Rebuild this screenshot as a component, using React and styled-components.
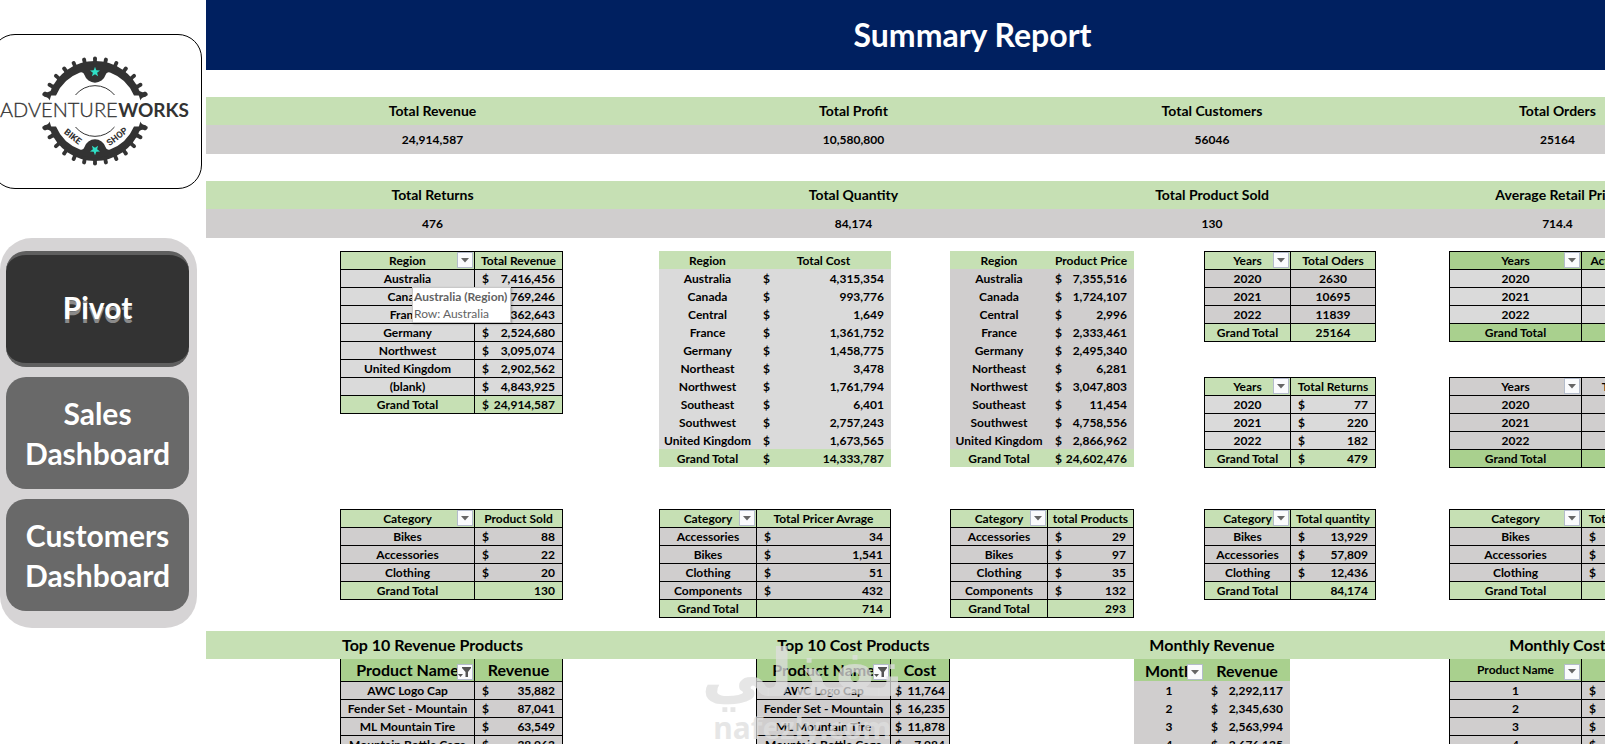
import React from 'react'
import styled, { createGlobalStyle } from 'styled-components'

const GREEN = '#c6e0b4';
const DARK_GREEN = '#a9d08e';
const GREY = '#d0cece';
const LIGHT_GREY = '#dadada';

const GlobalStyle = createGlobalStyle`
    * { box-sizing: border-box; }
    body {
        margin: 0;
        background: #fff;
        color: #000;
        font-family: Lato, "Liberation Sans", sans-serif;
        font-weight: bold;
    }
`;

const Page = styled.div`
    position: relative;
    display: flex;
    height: 100vh;
    overflow: hidden;
`;

const Sidebar = styled.aside`
    flex: 0 0 206px;
    padding-top: 34px;
`;

const LogoCard = styled.div`
    height: 155px;
    margin: 0 4px 49px -9px;
    padding: 16px 0 0 8px;
    border: 1px solid #000;
    border-radius: 24px;
`;

const Menu = styled.nav`
    display: flex;
    flex-direction: column;
    gap: 10px;
    margin-right: 9px;
    padding: 13px 8px 17px 6px;
    border-radius: 32px;
    background: #d6d4d5;
`;

const MenuButton = styled.button`
    height: ${(p) => (p.$active ? "116px" : "112px")};
    padding: ${(p) => (p.$active ? "0 10px 4px" : "0 10px")};
    border: 0 solid #5f5f5f;
    border-width: ${(p) => (p.$active ? "4px 0" : "0")};
    border-radius: 20px;
    background: ${(p) => (p.$active ? "#333" : "#696969")};
    color: #fff;
    font: bold 30px/40px Lato, sans-serif;
    text-shadow: ${(p) => (p.$active ? "0 4px 0 #8a8a8a" : "none")};
    cursor: pointer;
`;

const Main = styled.main`
    flex: 1;
    min-width: 0;
    overflow: hidden;
`;

// as wide as its columns, runs out of the window on the right
const Sheet = styled.div`
    width: max-content;
`;

const Title = styled.h1`
    margin: 0;
    background: #002060;
    color: #fff;
    font-size: 32px;
    line-height: 70px;
    text-align: center;
`;

// every band of the sheet shares the same columns
const Columns = styled.div`
    display: grid;
    grid-template-columns: 134px 135px 88px 96px 97px 135px 59px 98px 86px 70px 86px 86px 73px 133px 85px 72px;
    align-items: start;
`;

const Kpis = styled(Columns)`
    margin-top: 27px;
    background: linear-gradient(${GREEN} 0 28px, ${GREY} 28px);
`;

const Kpi = styled.div`
    grid-column: ${(p) => p.$span};
    text-align: center;
`;

const KpiName = styled.div`
    font-size: 14px;
    line-height: 28px;
`;

const KpiValue = styled.div`
    font-size: 12px;
    line-height: 29px;
`;

const Band = styled(Columns)`
    margin-top: ${(p) => p.$gap};
    background: ${(p) => (p.$fill ? GREEN : "transparent")};
`;

const BandTitle = styled.h2`
    grid-column: ${(p) => p.$span};
    margin: 0;
    font-size: 16px;
    line-height: 28px;
    text-align: center;
`;

const Cell = styled.div`
    position: relative;
    grid-column: ${(p) => p.$span};
    display: grid;
    gap: 35px;
`;

const Table = styled.table`
    width: 100%;
    table-layout: fixed;
    border-collapse: collapse;
    background: ${(p) => p.$body};
    font-size: 12px;
    line-height: 17px;

    th, td {
        position: relative;
        height: 18px;
        padding: 0;
        border: ${(p) => (p.$lines ? "1px solid #000" : "0")};
        text-align: center;
        white-space: nowrap;
    }
    thead th {
        height: ${(p) => (p.$tall ? "22px" : "18px")};
        background: ${(p) => p.$head};
        font-size: ${(p) => (p.$big ? "16px" : "12px")};
        ${(p) => p.$tall && "border-top: 0;"}
    }
    tfoot th, tfoot td {
        background: ${(p) => p.$foot};
    }
`;

const Col = styled.col`
    width: ${(p) => p.$width}px;
`;

const Money = styled.div`
    display: flex;
    justify-content: space-between;
    padding: 0 ${(p) => (p.$tight ? "4px" : "7px")};
`;

const FilterButton = styled.button`
    position: absolute;
    right: 1px;
    bottom: 1px;
    display: grid;
    place-items: center;
    width: 16px;
    height: 16px;
    padding: 0;
    border: 1px solid #b4bccb;
    background: #fafbfd;
    cursor: pointer;
`;

const Tooltip = styled.div`
    position: absolute;
    top: 36px;
    left: 72px;
    padding: 0 3px 0 1px;
    border: 1px solid #c8c8c8;
    background: #fff;
    box-shadow: 1px 1px 2px rgba(0,0,0,0.3);
    color: #636363;
    font-weight: normal;
    font-size: 12px;
    line-height: 17px;
    white-space: nowrap;
`;

const Watermark = styled.div`
    position: absolute;
    left: 50%;
    bottom: -2px;
    transform: translateX(-50%);
    color: rgba(222,222,222,0.75);
    font-family: "Noto Sans", "DejaVu Sans", sans-serif;
    text-align: center;
    pointer-events: none;
`;

const WatermarkName = styled.div`
    font: bold 66px/72px "DejaVu Sans", sans-serif;
`;

const WatermarkSite = styled.div`
    font-size: 30px;
    line-height: 36px;
`;

const TEETH = [-72, -60, -48, -36, -24, -12, 0, 12, 24, 36, 48, 60, 72];
const STAR = "M0-5.2 1.3-1.7 5-1.6 2.1.7 3.1 4.3 0 2.2-3.1 4.3-2.1.7-5-1.6-1.3-1.7Z";

function HalfGear() {
    return (
        <g fill="#333">
            <path d="M-52.500-15.500 Q-53.500-18-50-19.500 Q-47.500-18-44.500-20 A48 48 0 0 1 44.500-20 Q47.500-18 50-19.500 Q53.500-18 52.500-15.500 L39-15.500 A42 42 0 0 0 15-38.500 Q11.500-39.500 10.500-36 A11 11 0 0 1-10.500-36 Q-11.500-39.500-15-38.500 A42 42 0 0 0-39-15.500Z" />
            {TEETH.map((deg) => (
                <path key={deg} transform={`rotate(${deg})`} d="M-4-46.500 Q-1.300-48-2-52.500 Q-2-54.500 0-54.500 Q2-54.500 2-52.500 Q1.300-48 4-46.500Z" />
            ))}
            <path d="M-19.500-16 A25 25 0 0 1 19.500-16" fill="none" stroke="#333" strokeWidth="1" />
        </g>
    );
}

function Logo() {
    return (
        <svg width="192" height="120" viewBox="0 50 192 120" role="img" aria-label="AdventureWorks Bike Shop">
            <g transform="translate(95 110)"><HalfGear /></g>
            <g transform="translate(95 110) scale(1 -1)"><HalfGear /></g>
            <path d={STAR} transform="translate(95 71)" fill="#2fe0c6" />
            <path d={STAR} transform="translate(95 149) rotate(180)" fill="#2fe0c6" />
            <g fill="#333" fontFamily="Lato, sans-serif">
                <text x="0" y="116" fontSize="20" fontWeight="300" stroke="#333" strokeWidth="0.3">ADVENTURE</text>
                <text x="189" y="116" fontSize="19" fontWeight="700" textAnchor="end">WORKS</text>
                <g fontFamily="Roboto, sans-serif" fontSize="9" fontWeight="700" textAnchor="middle">
                    <text transform="translate(71 138) rotate(38)">BIKE</text>
                    <text transform="translate(119 138) rotate(-38)">SHOP</text>
                </g>
            </g>
        </svg>
    );
}

function Filter({ label, funnel }) {
    return (
        <FilterButton aria-label={"Filter " + label}>
            {funnel ? (
                <svg width="14" height="12" viewBox="0 0 14 12">
                    <path d="M4 1h9v1L10 6v5H7.500V6L4 2Z" fill="#555" />
                    <path d="M0 8h5L2.500 11Z" fill="#555" />
                </svg>
            ) : (
                <svg width="8" height="5" viewBox="0 0 8 5">
                    <path d="M0 0h8L4 4.500Z" fill="#666" />
                </svg>
            )}
        </FilterButton>
    );
}

// "$ 88" is spread over the cell, the rest stays centered or goes right
function Value({ text, right, tight }) {
    if (text.startsWith("$")) {
        return <Money $tight={tight}><span>$</span><span>{text.slice(1)}</span></Money>;
    }
    if (right) {
        return <Money><span /><span>{text}</span></Money>;
    }
    return text;
}

function Pivot({ first, heads, rows, total, filter, funnel, right, tight, plain, head = GREEN, body = GREY, foot = GREEN, tall, big }) {
    return (
        <Table $lines={!plain} $head={head} $body={body} $foot={foot} $tall={tall} $big={big}>
            <colgroup><Col $width={first} /><col /></colgroup>
            <thead>
                <tr>
                    <th scope="col">{heads[0]}{filter && <Filter label={heads[0]} funnel={funnel} />}</th>
                    <th scope="col">{heads[1]}</th>
                </tr>
            </thead>
            <tbody>
                {rows.map(([name, value]) => (
                    <tr key={name}>
                        <th scope="row">{name}</th>
                        <td><Value text={value} right={right} tight={tight} /></td>
                    </tr>
                ))}
            </tbody>
            {total !== undefined && (
                <tfoot>
                    <tr>
                        <th scope="row">Grand Total</th>
                        <td><Value text={total} right={right} tight={tight} /></td>
                    </tr>
                </tfoot>
            )}
        </Table>
    );
}

const SPANS = ["1 / 5", "5 / 9", "9 / 13", "13 / 17"];

const kpis = [
    [["Total Revenue", "24,914,587"], ["Total Profit", "10,580,800"], ["Total Customers", "56046"], ["Total Orders", "25164"]],
    [["Total Returns", "476"], ["Total Quantity", "84,174"], ["Total Product Sold", "130"], ["Average Retail Price", "714.4"]],
];

const revenue = [
    ["Australia", "$7,416,456"], ["Canada", "$1,769,246"], ["France", "$2,362,643"], ["Germany", "$2,524,680"],
    ["Northwest", "$3,095,074"], ["United Kingdom", "$2,902,562"], ["(blank)", "$4,843,925"],
];

const cost = [
    ["Australia", "$4,315,354"], ["Canada", "$993,776"], ["Central", "$1,649"], ["France", "$1,361,752"],
    ["Germany", "$1,458,775"], ["Northeast", "$3,478"], ["Northwest", "$1,761,794"], ["Southeast", "$6,401"],
    ["Southwest", "$2,757,243"], ["United Kingdom", "$1,673,565"],
];

const price = [
    ["Australia", "$7,355,516"], ["Canada", "$1,724,107"], ["Central", "$2,996"], ["France", "$2,333,461"],
    ["Germany", "$2,495,340"], ["Northeast", "$6,281"], ["Northwest", "$3,047,803"], ["Southeast", "$11,454"],
    ["Southwest", "$4,758,556"], ["United Kingdom", "$2,866,962"],
];

const emptyYears = [["2020", ""], ["2021", ""], ["2022", ""]];

export default function App() {
    return (
        <>
        <GlobalStyle />
        <Page>
            <Sidebar>
                <LogoCard><Logo /></LogoCard>
                <Menu>
                    <MenuButton $active>Pivot</MenuButton>
                    <MenuButton>Sales Dashboard</MenuButton>
                    <MenuButton>Customers Dashboard</MenuButton>
                </Menu>
            </Sidebar>
            <Main>
            <Sheet>
                <Title>Summary Report</Title>
                {kpis.map((line, i) => (
                    <Kpis key={i}>
                        {line.map(([name, value], n) => (
                            <Kpi key={name} $span={SPANS[n]}>
                                <KpiName>{name}</KpiName>
                                <KpiValue>{value}</KpiValue>
                            </Kpi>
                        ))}
                    </Kpis>
                ))}

                <Band $gap="13px">
                    <Cell $span="2 / 4">
                        <Pivot first={134} filter heads={["Region", "Total Revenue"]} rows={revenue} total="$24,914,587" body={LIGHT_GREY} />
                        <Tooltip role="tooltip"><b>Australia (Region)</b><br />Row: Australia</Tooltip>
                    </Cell>
                    <Cell $span="5 / 7">
                        <Pivot first={97} plain heads={["Region", "Total Cost"]} rows={cost} total="$14,333,787" body={LIGHT_GREY} />
                    </Cell>
                    <Cell $span="8 / 10">
                        <Pivot first={98} plain heads={["Region", "Product Price"]} rows={price} total="$24,602,476" />
                    </Cell>
                    <Cell $span="11 / 13">
                        <Pivot first={86} filter heads={["Years", "Total Oders"]} rows={[["2020", "2630"], ["2021", "10695"], ["2022", "11839"]]} total="25164" />
                        <Pivot first={86} filter heads={["Years", "Total Returns"]} rows={[["2020", "$77"], ["2021", "$220"], ["2022", "$182"]]} total="$479" body={LIGHT_GREY} />
                    </Cell>
                    <Cell $span="14 / 16">
                        <Pivot first={132} filter heads={["Years", "Active Users"]} rows={emptyYears} total="" head={DARK_GREEN} body={LIGHT_GREY} foot={DARK_GREEN} />
                        <Pivot first={132} filter heads={["Years", "Tot Cost"]} rows={emptyYears} total="" head={GREY} foot={DARK_GREEN} />
                    </Cell>
                </Band>

                <Band $gap="41px">
                    <Cell $span="2 / 4">
                        <Pivot first={134} filter right heads={["Category", "Product Sold"]} rows={[["Bikes", "$88"], ["Accessories", "$22"], ["Clothing", "$20"]]} total="130" />
                    </Cell>
                    <Cell $span="5 / 7">
                        <Pivot first={97} filter right heads={["Category", "Total Pricer Avrage"]} rows={[["Accessories", "$34"], ["Bikes", "$1,541"], ["Clothing", "$51"], ["Components", "$432"]]} total="714" />
                    </Cell>
                    <Cell $span="8 / 10">
                        <Pivot first={97} filter right heads={["Category", "total Products"]} rows={[["Accessories", "$29"], ["Bikes", "$97"], ["Clothing", "$35"], ["Components", "$132"]]} total="293" />
                    </Cell>
                    <Cell $span="11 / 13">
                        <Pivot first={86} filter right heads={["Category", "Total quantity"]} rows={[["Bikes", "$13,929"], ["Accessories", "$57,809"], ["Clothing", "$12,436"]]} total="84,174" />
                    </Cell>
                    <Cell $span="14 / 16">
                        <Pivot first={132} filter right heads={["Category", "Total Returns"]} rows={[["Bikes", "$"], ["Accessories", "$"], ["Clothing", "$"]]} total="" />
                    </Cell>
                </Band>

                <Band $gap="13px" $fill>
                    {["Top 10 Revenue Products", "Top 10 Cost Products", "Monthly Revenue", "Monthly Cost"].map((name, n) => (
                        <BandTitle key={name} $span={SPANS[n]}>{name}</BandTitle>
                    ))}
                </Band>
                <Band $gap="0">
                    <Cell $span="2 / 4">
                        <Pivot first={134} filter funnel tall big head={DARK_GREEN} heads={["Product Name", "Revenue"]} rows={[["AWC Logo Cap", "$35,882"], ["Fender Set - Mountain", "$87,041"], ["ML Mountain Tire", "$63,549"], ["Mountain Bottle Cage", "$38,963"]]} />
                    </Cell>
                    <Cell $span="6 / 8">
                        <Pivot first={134} filter funnel tall big tight head={DARK_GREEN} heads={["Product Name", "Cost"]} rows={[["AWC Logo Cap", "$11,764"], ["Fender Set - Mountain", "$16,235"], ["ML Mountain Tire", "$11,878"], ["Mountain Bottle Cage", "$7,984"]]} />
                    </Cell>
                    <Cell $span="10 / 12">
                        <Pivot first={70} filter plain tall big head={DARK_GREEN} heads={["Month", "Revenue"]} rows={[["1", "$2,292,117"], ["2", "$2,345,630"], ["3", "$2,563,994"], ["4", "$2,676,135"]]} />
                    </Cell>
                    <Cell $span="14 / 16">
                        <Pivot first={132} filter tall head={DARK_GREEN} heads={["Product Name", ""]} rows={[["1", "$"], ["2", "$"], ["3", "$"], ["4", "$"]]} />
                    </Cell>
                </Band>
            </Sheet>
            </Main>
            <Watermark>
                <WatermarkName lang="ar" dir="rtl">نفذلي</WatermarkName>
                <WatermarkSite>nafezly.com</WatermarkSite>
            </Watermark>
        </Page>
        </>
    );
}
